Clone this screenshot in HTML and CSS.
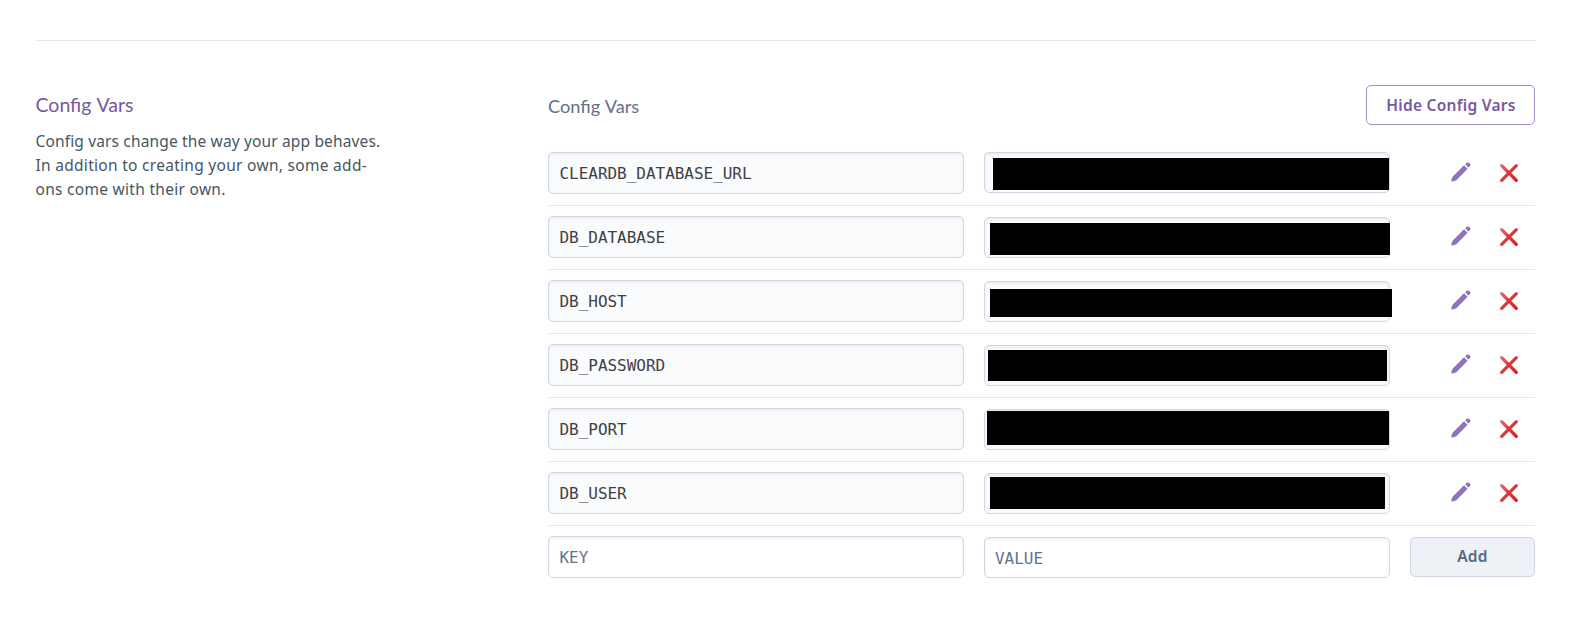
FILE: index.html
```html
<!DOCTYPE html>
<html lang="en">
<head>
<meta charset="utf-8">
<title>Config Vars</title>
<link rel="stylesheet" href="styles.css">
</head>
<body>
<svg class="defs" width="0" height="0" aria-hidden="true">
  <defs>
    <linearGradient id="red" gradientUnits="userSpaceOnUse" x1="0" y1="0" x2="18" y2="18"><stop offset="0" stop-color="#e27070"/><stop offset=".5" stop-color="#dd3535"/><stop offset="1" stop-color="#e30d0d"/></linearGradient>
    <symbol id="pencil" viewBox="0 0 20 20"><path fill="#9471b6" d="M.2 19.6Q.4 16.6 1.6 14.8L13 3.2 16.6 6.8 5.4 18.2Q3.3 19.5.2 19.6Z"/><path fill="#9471b6" d="M14.2 2.3 15.8.8Q17.2-.2 18.6 1.2 20 2.7 19 4.1L17.5 5.7Z"/></symbol>
    <symbol id="cross" viewBox="0 0 18 18"><path fill="none" stroke="url(#red)" stroke-width="3.1" stroke-linecap="round" d="M1.7 1.7 16.3 16.3M16.3 1.7 1.7 16.3"/></symbol>
  </defs>
</svg>
<main class="page">
  <section class="settings">
    <aside class="about">
      <h2 class="about-title">Config Vars</h2>
      <p class="about-text"><span class="tight">Config vars change the way your app behaves.</span><br>In addition to creating your own, some add-<br>ons come with their own.</p>
    </aside>
    <div class="vars">
      <header class="vars-head"><h3 class="vars-title">Config Vars</h3><button class="button toggle">Hide Config Vars</button></header>
      <div class="row first"><div class="field key">CLEARDB_DATABASE_URL</div><div class="field value"><span class="mask m1"></span></div><div class="actions"><svg class="pencil"><use href="#pencil"/></svg><svg class="cross"><use href="#cross"/></svg></div></div>
      <div class="row"><div class="field key">DB_DATABASE</div><div class="field value"><span class="mask m2"></span></div><div class="actions"><svg class="pencil"><use href="#pencil"/></svg><svg class="cross"><use href="#cross"/></svg></div></div>
      <div class="row"><div class="field key">DB_HOST</div><div class="field value"><span class="mask m3"></span></div><div class="actions"><svg class="pencil"><use href="#pencil"/></svg><svg class="cross"><use href="#cross"/></svg></div></div>
      <div class="row"><div class="field key">DB_PASSWORD</div><div class="field value"><span class="mask m4"></span></div><div class="actions"><svg class="pencil"><use href="#pencil"/></svg><svg class="cross"><use href="#cross"/></svg></div></div>
      <div class="row"><div class="field key">DB_PORT</div><div class="field value"><span class="mask m5"></span></div><div class="actions"><svg class="pencil"><use href="#pencil"/></svg><svg class="cross"><use href="#cross"/></svg></div></div>
      <div class="row"><div class="field key">DB_USER</div><div class="field value"><span class="mask m6"></span></div><div class="actions"><svg class="pencil"><use href="#pencil"/></svg><svg class="cross"><use href="#cross"/></svg></div></div>
      <div class="row new"><div class="field key">KEY</div><div class="field value">VALUE</div><button class="button add">Add</button></div>
    </div>
  </section>
</main>
</body>
</html>
```

FILE: styles.css
```css
* { box-sizing: border-box; }
body { margin: 0; background: #fff; font-family: "Noto Sans", sans-serif; }
.defs { position: absolute; }
.page { padding: 40px 45px 0 36px; }
.settings { display: grid; grid-template-columns: 512px 987px; border-top: 1px solid #e3e9f2; padding-top: 44px; }
.about-title { margin: 6px 0 0 -.5px; font-family: Lato, sans-serif; font-size: 19.5px; word-spacing: .8px; line-height: 28px; font-weight: 400; color: #79589f; }
.about-text { margin: 10px 0 0 -.5px; font-size: 15.5px; letter-spacing: .29px; line-height: 24px; color: #475662; white-space: nowrap; }
.tight { letter-spacing: .15px; }
.vars-head { display: flex; justify-content: space-between; height: 57px; }
.vars-title { margin: 7px 0 0; font-family: Lato, sans-serif; font-size: 18.2px; word-spacing: .6px; line-height: 28px; font-weight: 400; color: #62708a; }
.button { display: block; height: 40px; padding: 0; border-radius: 5px; font: 600 15.5px/38px "Noto Sans", sans-serif; letter-spacing: .27px; text-align: center; white-space: nowrap; }
.toggle { width: 169px; padding-left: 1px; border: 1px solid #a78fc3; background: #fff; color: #79589f; }
.add { width: 125px; margin-top: 1px; padding-bottom: 1px; border: 1px solid #cfd7e6; background: #eef1f6; color: #596981; line-height: 37px; }
.row { display: grid; grid-template-columns: 416px 406px 125px; column-gap: 20px; align-items: start; height: 64px; padding-top: 10px; border-bottom: 1px solid #e5e7f2; }
.new { border-bottom: 0; }
.field { height: 42px; padding: 0 10.5px; border: 1px solid #cfd7e6; border-radius: 5px; background: #fafbfd; box-shadow: inset 0 2px 3px rgba(80, 95, 130, .09); color: #3f3f44; font: 16px/42px "DejaVu Sans Mono", monospace; letter-spacing: -.03px; white-space: nowrap; }
.value { position: relative; height: 41px; margin-top: 1px; }
.first .value { margin-top: 0; }
.new .field { background: #fff; color: #62738d; }
.new .value { padding-left: 10px; }
.mask { position: absolute; background: #000; }
.m1 { left: 8px; top: 5px; width: 396px; height: 32px; }
.m2 { left: 5px; top: 5px; width: 400px; height: 32px; }
.m3 { left: 5px; top: 7px; width: 402px; height: 28px; }
.m4 { left: 3px; top: 4px; width: 399px; height: 31px; }
.m5 { left: 2px; top: 1px; width: 402px; height: 34px; }
.m6 { left: 5px; top: 3px; width: 395px; height: 32px; }
.actions { display: flex; justify-content: flex-end; gap: 29px; padding: 10px 17px 0 0; }
.pencil { width: 20px; height: 20px; margin-top: .4px; }
.cross { width: 18px; height: 18px; margin-top: 1.5px; }
```
